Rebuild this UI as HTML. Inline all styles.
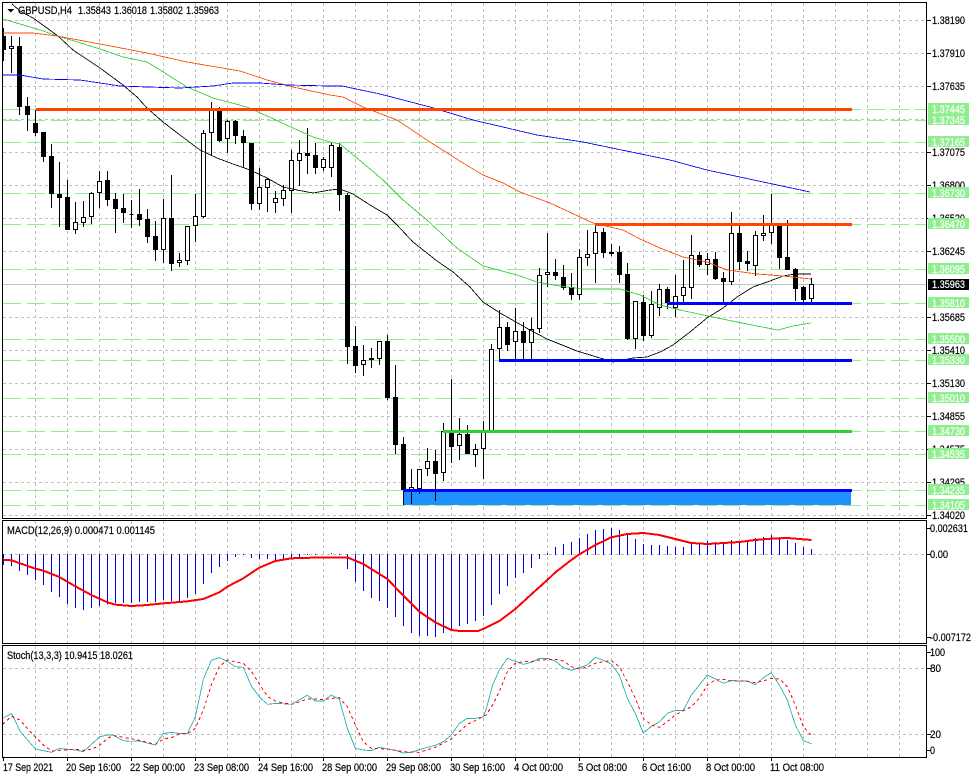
<!DOCTYPE html>
<html><head><meta charset="utf-8"><title>GBPUSD,H4</title>
<style>
html,body{margin:0;padding:0;background:#fff}
body{width:972px;height:778px;overflow:hidden}
svg{display:block}
text{font-family:"Liberation Sans",sans-serif;font-size:11px;fill:#000;stroke:#000;stroke-width:.2px}
text.w{fill:#fff;stroke:#fff}
</style></head><body>
<svg width="972" height="778" viewBox="0 0 972 778" xmlns="http://www.w3.org/2000/svg">
<rect width="972" height="778" fill="#fff"/>
<g shape-rendering="crispEdges" fill="none">
<!-- grid -->
<path stroke="#c0c0c0" stroke-dasharray="3 3" d="M3 20.5H926M3 53.5H926M3 86.5H926M3 119.5H926M3 152.5H926M3 185.5H926M3 218.5H926M3 251.5H926M3 317.5H926M3 350.5H926M3 383.5H926M3 416.5H926M3 449.5H926M3 482.5H926M3 515.5H926M3 554.5H926M3 668.5H926M3 734.5H926"/>
<path stroke="#c0c0c0" stroke-dasharray="3 3" d="M35.5 3V518M67.5 3V518M99.5 3V518M131.5 3V518M163.5 3V518M195.5 3V518M227.5 3V518M259.5 3V518M291.5 3V518M323.5 3V518M355.5 3V518M387.5 3V518M419.5 3V518M451.5 3V518M483.5 3V518M515.5 3V518M547.5 3V518M579.5 3V518M611.5 3V518M643.5 3V518M675.5 3V518M707.5 3V518M739.5 3V518M771.5 3V518M803.5 3V518M835.5 3V518M867.5 3V518M899.5 3V518"/>
<path stroke="#c0c0c0" stroke-dasharray="3 3" d="M35.5 521V643M67.5 521V643M99.5 521V643M131.5 521V643M163.5 521V643M195.5 521V643M227.5 521V643M259.5 521V643M291.5 521V643M323.5 521V643M355.5 521V643M387.5 521V643M419.5 521V643M451.5 521V643M483.5 521V643M515.5 521V643M547.5 521V643M579.5 521V643M611.5 521V643M643.5 521V643M675.5 521V643M707.5 521V643M739.5 521V643M771.5 521V643M803.5 521V643M835.5 521V643M867.5 521V643M899.5 521V643"/>
<path stroke="#c0c0c0" stroke-dasharray="3 3" d="M35.5 646V757M67.5 646V757M99.5 646V757M131.5 646V757M163.5 646V757M195.5 646V757M227.5 646V757M259.5 646V757M291.5 646V757M323.5 646V757M355.5 646V757M387.5 646V757M419.5 646V757M451.5 646V757M483.5 646V757M515.5 646V757M547.5 646V757M579.5 646V757M611.5 646V757M643.5 646V757M675.5 646V757M707.5 646V757M739.5 646V757M771.5 646V757M803.5 646V757M835.5 646V757M867.5 646V757M899.5 646V757"/>
<path stroke="#c0c0c0" d="M3 284.5H926"/>
<!-- green dashed levels -->
<path stroke="#90ee90" stroke-dasharray="18 6" d="M3 109.5H926M3 120.5H926M3 142.5H926M3 193.5H926M3 224.5H926M3 269.5H926M3 303.5H926M3 339.5H926M3 360.5H926M3 398.5H926M3 431.5H926M3 454.5H926M3 490.5H926M3 505.5H926"/>
<!-- zone -->
<rect x="403" y="490" width="448" height="15" fill="#1e90ff"/>
<!-- wicks -->
<path stroke="#000" d="M3.5 28V61M11.5 36V73M19.5 37V115M27.5 97V131M35.5 110V136M43.5 132V162M51.5 144V208M59.5 162V227M67.5 180V230M75.5 202V234M83.5 201V227M91.5 192V224M99.5 171V208M107.5 171V206M115.5 193V233M123.5 194V223M131.5 200V228M139.5 189V226M147.5 209V243M155.5 221V261M163.5 199V263M171.5 175V271M179.5 253V267M187.5 226V265M195.5 194V242M203.5 130V218M211.5 102V156M219.5 107V142M227.5 120V153M235.5 120V144M243.5 130V168M251.5 143V210M259.5 168V210M267.5 178V212M275.5 191V213M283.5 185V206M291.5 150V213M299.5 140V186M307.5 128V174M315.5 143V174M323.5 157V171M331.5 143V177M339.5 143V211M347.5 193V364M355.5 326V373M363.5 345V376M371.5 348V368M379.5 341V365M387.5 335V400M395.5 365V454M403.5 437V505M411.5 469V504M419.5 469V494M427.5 448V476M435.5 450V501M443.5 423V481M451.5 379V463M459.5 418V460M467.5 425V454M475.5 444V467M483.5 421V479M491.5 344V432M499.5 310V360M507.5 322V351M515.5 308V360M523.5 322V359M531.5 318V362M539.5 268V333M547.5 233V287M555.5 259V280M563.5 265V290M571.5 273V300M579.5 249V300M587.5 230V266M595.5 224V283M603.5 228V258M611.5 244V256M619.5 246V283M627.5 263V340M635.5 301V349M643.5 295V341M651.5 291V338M659.5 284V316M667.5 287V309M675.5 275V317M683.5 260V303M691.5 235V299M699.5 252V267M707.5 253V275M715.5 252V280M723.5 272V303M731.5 212V285M739.5 225V270M747.5 251V271M755.5 231V276M763.5 215V241M771.5 194V244M779.5 224V269M787.5 220V270M795.5 268V301M803.5 286V302M811.5 278V303"/>
<!-- white bodies -->
<path stroke="#000" fill="#fff" d="M9.5 46.5h4V48.5h-4zM73.5 222.5h4V229.5h-4zM81.5 217.5h4V222.5h-4zM89.5 193.5h4V216.5h-4zM97.5 181.5h4V192.5h-4zM161.5 218.5h4V249.5h-4zM177.5 260.5h4V262.5h-4zM185.5 226.5h4V260.5h-4zM193.5 216.5h4V225.5h-4zM201.5 133.5h4V216.5h-4zM209.5 109.5h4V132.5h-4zM225.5 121.5h4V138.5h-4zM257.5 187.5h4V203.5h-4zM265.5 179.5h4V187.5h-4zM273.5 198.5h4V202.5h-4zM281.5 190.5h4V198.5h-4zM289.5 160.5h4V190.5h-4zM297.5 153.5h4V160.5h-4zM321.5 159.5h4V167.5h-4zM329.5 145.5h4V167.5h-4zM361.5 360.5h4V364.5h-4zM369.5 358.5h4V359.5h-4zM377.5 341.5h4V358.5h-4zM409.5 487.5h4V489.5h-4zM417.5 469.5h4V488.5h-4zM425.5 461.5h4V468.5h-4zM441.5 431.5h4V472.5h-4zM457.5 434.5h4V445.5h-4zM473.5 449.5h4V454.5h-4zM481.5 432.5h4V448.5h-4zM489.5 349.5h4V431.5h-4zM497.5 327.5h4V348.5h-4zM513.5 331.5h4V341.5h-4zM529.5 329.5h4V342.5h-4zM537.5 275.5h4V328.5h-4zM545.5 272.5h4V274.5h-4zM577.5 257.5h4V294.5h-4zM585.5 254.5h4V257.5h-4zM593.5 232.5h4V253.5h-4zM633.5 301.5h4V338.5h-4zM649.5 304.5h4V335.5h-4zM657.5 289.5h4V307.5h-4zM673.5 296.5h4V307.5h-4zM681.5 287.5h4V295.5h-4zM689.5 255.5h4V287.5h-4zM705.5 259.5h4V264.5h-4zM729.5 233.5h4V281.5h-4zM753.5 235.5h4V265.5h-4zM761.5 233.5h4V235.5h-4zM769.5 225.5h4V232.5h-4zM809.5 284.5h4V298.5h-4z"/>
<!-- black bodies -->
<path stroke="#000" fill="#000" d="M3.5 36.5H5.5V49.5H3.5zM17.5 46.5h4V106.5h-4zM25.5 106.5h4V114.5h-4zM33.5 123.5h4V132.5h-4zM41.5 132.5h4V156.5h-4zM49.5 156.5h4V193.5h-4zM57.5 194.5h4V197.5h-4zM65.5 197.5h4V229.5h-4zM105.5 180.5h4V199.5h-4zM113.5 199.5h4V208.5h-4zM121.5 208.5h4V212.5h-4zM129.5 214.5h4V214.5h-4zM137.5 214.5h4V219.5h-4zM145.5 219.5h4V236.5h-4zM153.5 236.5h4V249.5h-4zM169.5 218.5h4V263.5h-4zM217.5 108.5h4V140.5h-4zM233.5 121.5h4V135.5h-4zM241.5 136.5h4V142.5h-4zM249.5 143.5h4V203.5h-4zM305.5 153.5h4V155.5h-4zM313.5 155.5h4V167.5h-4zM337.5 147.5h4V194.5h-4zM345.5 195.5h4V346.5h-4zM353.5 346.5h4V365.5h-4zM385.5 341.5h4V397.5h-4zM393.5 397.5h4V444.5h-4zM401.5 444.5h4V489.5h-4zM433.5 461.5h4V473.5h-4zM449.5 432.5h4V446.5h-4zM465.5 434.5h4V453.5h-4zM505.5 327.5h4V344.5h-4zM521.5 331.5h4V342.5h-4zM553.5 272.5h4V275.5h-4zM561.5 277.5h4V287.5h-4zM569.5 287.5h4V294.5h-4zM601.5 232.5h4V252.5h-4zM609.5 252.5h4V253.5h-4zM617.5 252.5h4V274.5h-4zM625.5 274.5h4V338.5h-4zM641.5 302.5h4V335.5h-4zM665.5 289.5h4V302.5h-4zM697.5 255.5h4V264.5h-4zM713.5 259.5h4V278.5h-4zM721.5 278.5h4V281.5h-4zM737.5 233.5h4V261.5h-4zM745.5 261.5h4V263.5h-4zM777.5 226.5h4V257.5h-4zM785.5 257.5h4V269.5h-4zM793.5 269.5h4V288.5h-4zM801.5 287.5h4V299.5h-4z"/>
<!-- moving averages -->
<polyline stroke="#000" stroke-width=".85" points="12,4 20,11 33,18 47,28 58,36 73,50 100,68 123,85 137,97 147,108 163,122 180,135 200,150 217,158 233,164 250,170 267,178 283,187 297,190 313,193 330,190 340,189 353,194 370,205 387,215 397,225 413,242 437,261 453,272 470,287 483,302 500,313 530,330 547,339 577,351 600,358 613,362 633,358 647,357 660,352 673,345 690,332 707,318 723,308 737,297 753,287 770,281 783,276 795,274 811,274"/>
<polyline stroke="#32cd32" stroke-width=".85" points="3,19 20,24 40,30 58,36 100,49 123,57 147,62 160,70 187,87 213,98 247,107 267,116 293,128 313,137 330,142 340,144 357,158 383,180 403,200 427,220 457,248 483,266 517,275 537,282 560,286 583,289 620,289 640,295 660,305 680,310 708,316 737,322 757,326 778,330 793,326 811,323"/>
<polyline stroke="#ff4500" stroke-width=".85" points="3,33 33,33 57,36 100,44 147,53 187,62 240,71 267,80 293,87 330,95 343,97 363,107 397,120 430,142 463,163 483,175 503,183 520,192 550,203 593,223 623,230 640,239 660,248 683,257 707,262 727,270 757,274 783,276 811,279"/>
<polyline stroke="#0000ff" stroke-width=".85" points="3,75 20,75 43,79 80,80 120,86 147,87 180,88 213,86 233,83 260,83 287,85 330,86 342,86 380,94 430,107 473,120 537,135 583,142 670,160 707,170 810,192"/>
<!-- thick objects -->
<rect x="36" y="108" width="816" height="3" fill="#ff4500"/>
<rect x="595" y="223" width="257" height="3" fill="#ff4500"/>
<rect x="667" y="302" width="185" height="3" fill="#0000ff"/>
<rect x="499" y="359" width="353" height="3" fill="#0000ff"/>
<rect x="443" y="430" width="409" height="3" fill="#32cd32"/>
<rect x="403" y="489" width="449" height="3" fill="#0000ff"/>
<!-- MACD histogram -->
<g transform="matrix(1 0 0 .33333 0 515)">
<path stroke="#0000dd" d="M3.5 117V150M11.5 117V153M19.5 117V168M27.5 117V180M35.5 117V195M43.5 117V210M51.5 117V231M59.5 117V246M67.5 117V268M75.5 117V279M83.5 117V285M91.5 117V279M99.5 117V273M107.5 117V268M115.5 117V264M123.5 117V264M131.5 117V264M139.5 117V261M147.5 117V261M155.5 117V261M163.5 117V255M171.5 117V258M179.5 117V258M187.5 117V249M195.5 117V237M203.5 117V207M211.5 117V174M219.5 117V156M227.5 117V138M235.5 117V126M243.5 117V120M251.5 117V129M259.5 117V132M267.5 117V132M275.5 117V135M283.5 117V132M291.5 117V132M299.5 117V126M307.5 117V120M315.5 117V120M331.5 114V117M339.5 117V120M347.5 117V162M355.5 117V201M363.5 117V228M371.5 117V249M379.5 117V258M387.5 117V279M395.5 117V306M403.5 117V333M411.5 117V354M419.5 117V363M427.5 117V363M435.5 117V366M443.5 117V354M451.5 117V345M459.5 117V333M467.5 117V327M475.5 117V318M483.5 117V303M491.5 117V270M499.5 117V237M507.5 117V213M515.5 117V189M523.5 117V174M531.5 117V159M539.5 117V132M547.5 114V120M555.5 96V120M563.5 87V120M571.5 81V120M579.5 69V120M587.5 57V120M595.5 45V120M603.5 42V120M611.5 39V120M619.5 45V120M627.5 54V120M635.5 72V120M643.5 87V120M651.5 90V120M659.5 90V120M667.5 93V120M675.5 96V120M683.5 96V120M691.5 87V120M699.5 84V120M707.5 78V120M715.5 81V120M723.5 81V120M731.5 75V120M739.5 78V120M747.5 75V120M755.5 69V120M763.5 66V120M771.5 60V120M779.5 66V120M787.5 75V120M795.5 84V120M803.5 96V120M811.5 102V120"/>
</g>
<!-- MACD signal -->
<g transform="translate(0 515) scale(.33333)">
<polyline stroke="#ff0000" stroke-width="6" points="8,134 35,136 60,145 106,161 130,167 178,186 226,214 274,240 322,262 346,269 394,273 442,270 490,265 562,259 610,252 658,232 682,215 730,190 778,158 826,138 874,130 970,127 1042,127 1090,147 1162,192 1210,242 1258,290 1306,322 1354,345 1378,348 1434,348 1458,338 1498,318 1546,282 1594,238 1642,195 1666,172 1714,135 1738,118 1786,90 1834,67 1882,57 1930,54 1978,60 2026,72 2074,84 2122,87 2170,84 2218,81 2266,75 2314,71 2362,69 2410,73 2434,75"/>
<!-- Stoch main -->
<polyline stroke="#20b2aa" stroke-width="2.6" points="8,610 35,596 60,648 106,702 130,707 155,712 178,700 202,703 226,705 250,710 300,665 322,660 338,660 370,677 394,679 418,678 466,690 490,656 514,652 538,655 562,656 586,606 610,493 634,436 658,428 682,439 706,455 730,457 755,515 780,548 803,568 830,565 874,568 922,541 946,558 970,558 994,540 1018,553 1042,640 1066,700 1090,705 1114,707 1138,697 1162,702 1186,706 1210,714 1234,712 1258,704 1282,697 1306,691 1330,680 1354,660 1378,625 1402,610 1426,610 1450,606 1458,585 1478,510 1498,465 1522,430 1546,439 1570,448 1594,442 1618,430 1642,430 1666,438 1690,458 1714,466 1738,458 1762,450 1786,427 1810,436 1834,447 1858,480 1882,550 1906,595 1930,655 1954,634 1978,621 2002,595 2026,586 2050,586 2074,540 2098,510 2122,480 2146,492 2170,505 2194,496 2218,498 2242,498 2266,509 2290,488 2314,473 2338,510 2362,555 2386,630 2410,677 2434,686"/>
<!-- Stoch signal -->
<polyline stroke="#ff0000" stroke-width="3" stroke-dasharray="9 9" points="8,628 35,604 60,615 90,650 130,690 155,708 178,706 226,703 250,706 275,703 300,690 325,668 345,662 370,667 418,676 466,688 490,672 514,668 538,656 562,656 586,640 610,585 634,510 658,455 682,435 706,441 730,445 755,470 780,510 803,545 830,560 874,568 900,560 922,552 970,553 1018,548 1042,575 1066,630 1090,680 1114,700 1162,702 1210,710 1258,712 1306,697 1354,672 1378,650 1402,628 1426,617 1458,600 1478,570 1498,530 1522,470 1546,445 1570,440 1594,440 1618,435 1666,433 1690,438 1714,455 1738,462 1762,456 1786,445 1810,440 1834,437 1858,455 1882,500 1906,550 1930,610 1954,630 1978,637 2002,620 2026,600 2050,587 2074,575 2098,550 2122,510 2146,495 2170,493 2194,498 2242,499 2266,503 2290,498 2314,490 2338,492 2362,515 2386,570 2410,635 2434,662"/>
</g>
<!-- frames -->
<path stroke="#000" d="M2.5 2.5H926.5V518.5H2.5ZM2.5 520.5H926.5V643.5H2.5ZM2.5 645.5H926.5V757.5H2.5Z"/>
<!-- ticks -->
<path stroke="#000" d="M927 20.5h4M927 53.5h4M927 86.5h4M927 152.5h4M927 185.5h4M927 218.5h4M927 251.5h4M927 317.5h4M927 350.5h4M927 383.5h4M927 416.5h4M927 449.5h4M927 482.5h4M927 515.5h4M927 528.5h4M927 554.5h4M927 637.5h4M927 652.5h4M927 668.5h4M927 734.5h4M927 750.5h4M3.5 758v3M67.5 758v3M131.5 758v3M195.5 758v3M259.5 758v3M323.5 758v3M387.5 758v3M451.5 758v3M515.5 758v3M579.5 758v3M643.5 758v3M707.5 758v3M771.5 758v3"/>
<path fill="#000" d="M7 9H14L10.5 12.5Z"/>
</g>
<!-- title -->
<text x="18" y="14" textLength="54" lengthAdjust="spacingAndGlyphs">GBPUSD,H4</text>
<text x="78" y="14" textLength="33" lengthAdjust="spacingAndGlyphs">1.35843</text>
<text x="114" y="14" textLength="33" lengthAdjust="spacingAndGlyphs">1.36018</text>
<text x="150" y="14" textLength="33" lengthAdjust="spacingAndGlyphs">1.35802</text>
<text x="186" y="14" textLength="33" lengthAdjust="spacingAndGlyphs">1.35963</text>
<text x="7" y="534" textLength="148" lengthAdjust="spacingAndGlyphs">MACD(12,26,9) 0.000471 0.001145</text>
<text x="7" y="659" textLength="126" lengthAdjust="spacingAndGlyphs">Stoch(13,3,3) 10.9415 18.0261</text>
<!-- price axis -->
<text x="932" y="24" textLength="33" lengthAdjust="spacingAndGlyphs">1.38190</text>
<text x="932" y="57" textLength="33" lengthAdjust="spacingAndGlyphs">1.37910</text>
<text x="932" y="90" textLength="33" lengthAdjust="spacingAndGlyphs">1.37635</text>
<text x="932" y="156" textLength="33" lengthAdjust="spacingAndGlyphs">1.37075</text>
<text x="932" y="189" textLength="33" lengthAdjust="spacingAndGlyphs">1.36800</text>
<text x="932" y="222" textLength="33" lengthAdjust="spacingAndGlyphs">1.36520</text>
<text x="932" y="255" textLength="33" lengthAdjust="spacingAndGlyphs">1.36245</text>
<text x="932" y="321" textLength="33" lengthAdjust="spacingAndGlyphs">1.35685</text>
<text x="932" y="354" textLength="33" lengthAdjust="spacingAndGlyphs">1.35410</text>
<text x="932" y="387" textLength="33" lengthAdjust="spacingAndGlyphs">1.35130</text>
<text x="932" y="420" textLength="33" lengthAdjust="spacingAndGlyphs">1.34855</text>
<text x="932" y="453" textLength="33" lengthAdjust="spacingAndGlyphs">1.34575</text>
<text x="932" y="486" textLength="33" lengthAdjust="spacingAndGlyphs">1.34295</text>
<text x="932" y="519" textLength="33" lengthAdjust="spacingAndGlyphs">1.34020</text>
<!-- level tags -->
<g shape-rendering="crispEdges" fill="#90ee90">
<rect x="928" y="103" width="41" height="22"/>
<rect x="928" y="136" width="41" height="11"/>
<rect x="928" y="187" width="41" height="11"/>
<rect x="928" y="218" width="41" height="11"/>
<rect x="928" y="263" width="41" height="11"/>
<rect x="928" y="297" width="41" height="11"/>
<rect x="928" y="333" width="41" height="11"/>
<rect x="928" y="354" width="41" height="11"/>
<rect x="928" y="392" width="41" height="11"/>
<rect x="928" y="425" width="41" height="11"/>
<rect x="928" y="448" width="41" height="11"/>
<rect x="928" y="484" width="41" height="11"/>
<rect x="928" y="499" width="41" height="11"/>
<rect x="928" y="279" width="41" height="11" fill="#000"/>
</g>
<text class="w" x="932" y="113" textLength="33" lengthAdjust="spacingAndGlyphs">1.37445</text>
<text class="w" x="932" y="124" textLength="33" lengthAdjust="spacingAndGlyphs">1.37345</text>
<text class="w" x="932" y="146" textLength="33" lengthAdjust="spacingAndGlyphs">1.37165</text>
<text class="w" x="932" y="197" textLength="33" lengthAdjust="spacingAndGlyphs">1.36730</text>
<text class="w" x="932" y="228" textLength="33" lengthAdjust="spacingAndGlyphs">1.36470</text>
<text class="w" x="932" y="273" textLength="33" lengthAdjust="spacingAndGlyphs">1.36095</text>
<text class="w" x="932" y="288" textLength="33" lengthAdjust="spacingAndGlyphs">1.35963</text>
<text class="w" x="932" y="307" textLength="33" lengthAdjust="spacingAndGlyphs">1.35810</text>
<text class="w" x="932" y="343" textLength="33" lengthAdjust="spacingAndGlyphs">1.35500</text>
<text class="w" x="932" y="364" textLength="33" lengthAdjust="spacingAndGlyphs">1.35330</text>
<text class="w" x="932" y="402" textLength="33" lengthAdjust="spacingAndGlyphs">1.35010</text>
<text class="w" x="932" y="435" textLength="33" lengthAdjust="spacingAndGlyphs">1.34730</text>
<text class="w" x="932" y="458" textLength="33" lengthAdjust="spacingAndGlyphs">1.34535</text>
<text class="w" x="932" y="494" textLength="33" lengthAdjust="spacingAndGlyphs">1.34235</text>
<text class="w" x="932" y="509" textLength="33" lengthAdjust="spacingAndGlyphs">1.34105</text>
<!-- indicator axes -->
<text x="930" y="532" textLength="38" lengthAdjust="spacingAndGlyphs">0.002631</text>
<text x="930" y="558" textLength="18" lengthAdjust="spacingAndGlyphs">0.00</text>
<text x="930" y="641" textLength="41" lengthAdjust="spacingAndGlyphs">-0.007172</text>
<text x="930" y="656" textLength="15" lengthAdjust="spacingAndGlyphs">100</text>
<text x="930" y="672" textLength="11" lengthAdjust="spacingAndGlyphs">80</text>
<text x="930" y="738" textLength="11" lengthAdjust="spacingAndGlyphs">20</text>
<text x="930" y="754" textLength="5" lengthAdjust="spacingAndGlyphs">0</text>
<!-- time axis -->
<text x="3" y="771" textLength="50" lengthAdjust="spacingAndGlyphs">17 Sep 2021</text>
<text x="66" y="771" textLength="55" lengthAdjust="spacingAndGlyphs">20 Sep 16:00</text>
<text x="130" y="771" textLength="55" lengthAdjust="spacingAndGlyphs">22 Sep 00:00</text>
<text x="194" y="771" textLength="55" lengthAdjust="spacingAndGlyphs">23 Sep 08:00</text>
<text x="258" y="771" textLength="55" lengthAdjust="spacingAndGlyphs">24 Sep 16:00</text>
<text x="322" y="771" textLength="55" lengthAdjust="spacingAndGlyphs">28 Sep 00:00</text>
<text x="386" y="771" textLength="55" lengthAdjust="spacingAndGlyphs">29 Sep 08:00</text>
<text x="450" y="771" textLength="55" lengthAdjust="spacingAndGlyphs">30 Sep 16:00</text>
<text x="514" y="771" textLength="49" lengthAdjust="spacingAndGlyphs">4 Oct 00:00</text>
<text x="578" y="771" textLength="49" lengthAdjust="spacingAndGlyphs">5 Oct 08:00</text>
<text x="642" y="771" textLength="49" lengthAdjust="spacingAndGlyphs">6 Oct 16:00</text>
<text x="706" y="771" textLength="49" lengthAdjust="spacingAndGlyphs">8 Oct 00:00</text>
<text x="770" y="771" textLength="54" lengthAdjust="spacingAndGlyphs">11 Oct 08:00</text>
</svg>
</body></html>
